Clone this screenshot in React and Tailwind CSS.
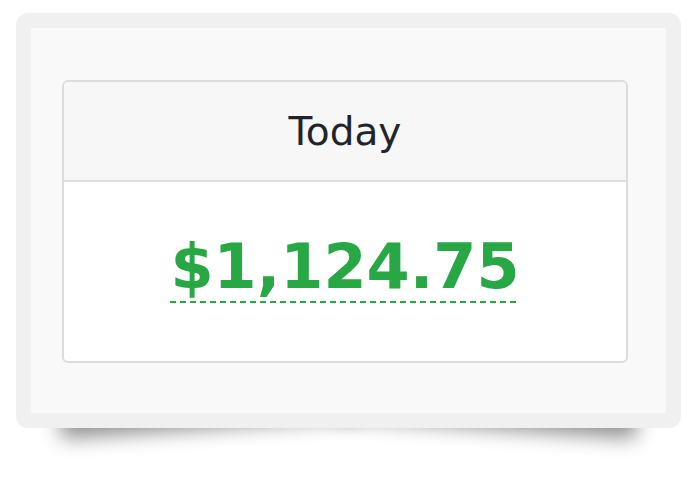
import React from 'react';

const font = { fontFamily: '"DejaVu Sans", Verdana, sans-serif' };

const TodayCard = ({ label, amount }) => (
  <div className="w-[566px] h-[283px] flex flex-col rounded-[6px] border-2 border-[#dcdcdc] bg-white overflow-hidden">
    <div className="h-[100px] shrink-0 flex items-center justify-center bg-[#f7f7f7] border-b-2 border-[#dcdcdc]">
      <span className="text-[39px] leading-none text-[#212529]">{label}</span>
    </div>
    <div className="flex-1 flex items-center justify-center pb-[5px]">
      <div className="flex flex-col">
        <span className="text-[62px] leading-none font-bold text-[#28a745]">{amount}</span>
        {/* dashed underline */}
        <div className="h-[2px] mt-[3px] bg-[repeating-linear-gradient(90deg,#28a745_0_6px,transparent_6px_10px)]" />
      </div>
    </div>
  </div>
);

export default function App() {
  return (
    <div className="min-h-screen bg-white pt-[13px] pl-[16px]" style={font}>
      <div className="relative w-[665px]">
        {/* lifted-corner shadows */}
        <div className="absolute left-[42px] bottom-[26px] w-[300px] h-[40px] bg-[#999] shadow-[0_26px_20px_rgba(0,0,0,0.45)] -rotate-[4deg]" />
        <div className="absolute right-[42px] bottom-[26px] w-[300px] h-[40px] bg-[#999] shadow-[0_26px_20px_rgba(0,0,0,0.45)] rotate-[4deg]" />
        <div className="relative rounded-[12px] bg-[#f0f0f0] p-[15px]">
          <div className="h-[385px] bg-[#f9f9f9] pt-[52px] pl-[31px]">
            <TodayCard label="Today" amount="$1,124.75" />
          </div>
        </div>
      </div>
    </div>
  );
}
